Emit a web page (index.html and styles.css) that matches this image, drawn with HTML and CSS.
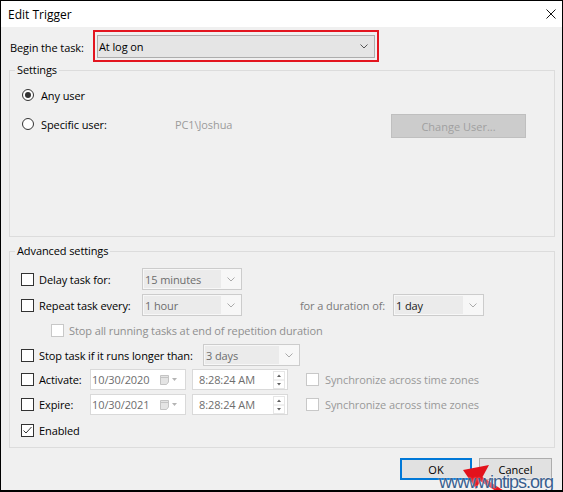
FILE: index.html
```html
<!DOCTYPE html>
<html>
<head>
<meta charset="utf-8">
<link rel="stylesheet" href="styles.css">
</head>
<body>
<div class="window">
  <div class="titlebar">
    <span class="title">Edit Trigger</span>
    <svg class="close" viewBox="0 0 10 10"><path d="M0.5 0.5L9.5 9.5M9.5 0.5L0.5 9.5" stroke="#111" stroke-width="1"/></svg>
  </div>
  <div class="content">
    <div class="begin-row">
      <span class="begin-label">Begin the task:</span>
      <div class="highlight">
        <div class="combo-main">
          <span>At log on</span>
          <svg class="chev" viewBox="0 0 8 5"><path d="M0.5 0.5L4 4L7.5 0.5" fill="none" stroke="#555"/></svg>
        </div>
      </div>
    </div>

    <fieldset class="group group-settings">
      <legend>Settings</legend>
      <div class="opt-row row-any">
        <span class="radio checked"></span>
        <span class="radio-text">Any user</span>
      </div>
      <div class="opt-row row-specific">
        <span class="radio up"></span>
        <span class="radio-text w-specific up">Specific user:</span>
        <span class="user-name up">PC1\Joshua</span>
        <button class="btn-change">Change User...</button>
      </div>
    </fieldset>

    <fieldset class="group group-advanced">
      <legend>Advanced settings</legend>
      <div class="adv-row r1">
        <div class="lbl w121"><span class="chk"></span><span class="chk-text">Delay task for:</span></div>
        <div class="combo-sm cw100">
          <span class="field">15 minutes</span>
          <svg class="chev" viewBox="0 0 8 5"><path d="M0.5 0.5L4 4L7.5 0.5" fill="none" stroke="#aaa"/></svg>
        </div>
      </div>
      <div class="adv-row r2">
        <div class="lbl w121"><span class="chk"></span><span class="chk-text">Repeat task every:</span></div>
        <div class="combo-sm cw100">
          <span class="field">1 hour</span>
          <svg class="chev" viewBox="0 0 8 5"><path d="M0.5 0.5L4 4L7.5 0.5" fill="none" stroke="#aaa"/></svg>
        </div>
        <span class="duration-label">for a duration of:</span>
        <div class="combo-sm cw91">
          <span class="field dark">1 day</span>
          <svg class="chev" viewBox="0 0 8 5"><path d="M0.5 0.5L4 4L7.5 0.5" fill="none" stroke="#aaa"/></svg>
        </div>
      </div>
      <div class="adv-row r3">
        <span class="chk disabled"></span><span class="chk-text muted">Stop all running tasks at end of repetition duration</span>
      </div>
      <div class="adv-row r4">
        <div class="lbl w182"><span class="chk"></span><span class="chk-text">Stop task if it runs longer than:</span></div>
        <div class="combo-sm cw97">
          <span class="field">3 days</span>
          <svg class="chev" viewBox="0 0 8 5"><path d="M0.5 0.5L4 4L7.5 0.5" fill="none" stroke="#aaa"/></svg>
        </div>
      </div>
      <div class="adv-row r5">
        <div class="lbl w69"><span class="chk"></span><span class="chk-text">Activate:</span></div>
        <div class="picker date">
          <span>10/30/2020</span>
          <svg class="cal" viewBox="0 0 9 10"><path d="M0.5 0.5H8.5V7L6.5 9.5H0.5Z" fill="#e4e4e4" stroke="#c4c4c4"/><path d="M1 2.5H8" stroke="#c4c4c4"/></svg>
          <svg class="drop" viewBox="0 0 5 3"><path d="M0 0H5L2.5 3Z" fill="#b4b4b4"/></svg>
        </div>
        <div class="picker time">
          <span>8:28:24 AM</span>
          <svg class="spin" viewBox="0 0 12 18"><rect x="0.5" y="0.5" width="11" height="17" fill="#fff" stroke="#e6e6e6"/><path d="M1 9H11" stroke="#e0e0e0"/><path d="M4 6L6 3.5L8 6Z" fill="#606060"/><path d="M4 12L8 12L6 14.5Z" fill="#606060"/></svg>
        </div>
        <span class="chk disabled sync"></span><span class="sync-text">Synchronize across time zones</span>
      </div>
      <div class="adv-row r6">
        <div class="lbl w69"><span class="chk"></span><span class="chk-text">Expire:</span></div>
        <div class="picker date">
          <span>10/30/2021</span>
          <svg class="cal" viewBox="0 0 9 10"><path d="M0.5 0.5H8.5V7L6.5 9.5H0.5Z" fill="#e4e4e4" stroke="#c4c4c4"/><path d="M1 2.5H8" stroke="#c4c4c4"/></svg>
          <svg class="drop" viewBox="0 0 5 3"><path d="M0 0H5L2.5 3Z" fill="#b4b4b4"/></svg>
        </div>
        <div class="picker time">
          <span>8:28:24 AM</span>
          <svg class="spin" viewBox="0 0 12 18"><rect x="0.5" y="0.5" width="11" height="17" fill="#fff" stroke="#e6e6e6"/><path d="M1 9H11" stroke="#e0e0e0"/><path d="M4 6L6 3.5L8 6Z" fill="#606060"/><path d="M4 12L8 12L6 14.5Z" fill="#606060"/></svg>
        </div>
        <span class="chk disabled sync"></span><span class="sync-text">Synchronize across time zones</span>
      </div>
      <div class="adv-row r7">
        <span class="chk checked"><svg viewBox="0 0 11 11"><path d="M1.5 5.5L4 8L9.5 2" fill="none" stroke="#333" stroke-width="1"/></svg></span>
        <span class="chk-text">Enabled</span>
      </div>
    </fieldset>

    <div class="buttons">
      <button class="btn btn-ok">OK</button>
      <button class="btn btn-cancel">Cancel</button>
    </div>
  </div>

  <svg class="arrow" viewBox="0 0 563 492">
    <path d="M478 477L508 496" stroke="#e3121c" stroke-width="4.5"/>
    <path d="M463 470L489 465L476 489Z" fill="#e3121c"/>
  </svg>
  <span class="watermark">www.wintips.org</span>
</div>
</body>
</html>
```

FILE: styles.css
```css
* {
  box-sizing: border-box;
}

html,
body {
  margin: 0;
  padding: 0;
}

body {
  font-family: "Open Sans", "Noto Sans", sans-serif;
  font-size: 11px;
  letter-spacing: -0.1px;
  color: #000;
  background: #fff;
}

.window {
  position: relative;
  width: 563px;
  height: 492px;
  border: 1px solid #000;
  border-bottom-width: 2px;
  background: #f0f0f0;
  overflow: hidden;
}

.titlebar {
  height: 26px;
  background: #fff;
  display: flex;
  align-items: center;
  justify-content: space-between;
  padding: 0 6px 0 7px;
}

.title {
  font-size: 12px;
  letter-spacing: 0;
}

.close {
  width: 10px;
  height: 10px;
}

.content {
  padding: 0 7px 0 8px;
}

.begin-row {
  display: flex;
  align-items: center;
  margin-top: 3px;
}

.begin-label {
  width: 84px;
  padding-left: 1px;
  padding-top: 3px;
}

.highlight {
  border: 2px solid #e3151f;
  padding: 3px 2px 2px 2px;
}

.combo-main {
  width: 278px;
  height: 23px;
  border: 1px solid #adadad;
  background: #e5e5e5;
  display: flex;
  align-items: center;
  justify-content: space-between;
  padding: 0 6px 0 1px;
}

.chev {
  width: 8px;
  height: 5px;
  flex: none;
}

.group {
  margin: 0;
  padding: 0;
  border: 1px solid #dcdcdc;
  min-width: 0;
  width: 100%;
}

.group legend {
  margin-left: 5px;
  padding: 0 2px;
  line-height: 16px;
}

.group-settings {
  height: 175px;
}

.group-advanced {
  height: 205px;
  margin-top: 6px;
}

.opt-row {
  display: flex;
  align-items: center;
  margin-left: 12px;
}

.row-any {
  margin-top: 7px;
  height: 20px;
}

.row-specific {
  margin-top: 9px;
  height: 24px;
}

.up {
  margin-bottom: 4px;
}

.radio {
  width: 12px;
  height: 12px;
  border: 1px solid #333;
  border-radius: 50%;
  background: #fff;
  display: flex;
  align-items: center;
  justify-content: center;
  flex: none;
}

.radio.checked::after {
  content: "";
  width: 6px;
  height: 6px;
  border-radius: 50%;
  background: #333;
}

.radio-text {
  margin-left: 7px;
}

.w-specific {
  width: 134px;
}

.user-name {
  color: #9b9b9b;
}

.btn-change {
  margin-left: auto;
  margin-right: 28px;
  width: 135px;
  height: 24px;
  background: #cccccc;
  border: 1px solid #bfbfbf;
  color: #a0a0a0;
  font: inherit;
  padding: 0;
}

.adv-row {
  display: flex;
  align-items: center;
  margin-left: 11px;
}

.r1 {
  margin-top: 9px;
  height: 22px;
}

.r2 {
  margin-top: 4px;
  height: 22px;
}

.r3 {
  margin-top: 4px;
  height: 20px;
  margin-left: 41px;
}

.r4 {
  margin-top: 4px;
  height: 22px;
}

.r5 {
  margin-top: 3px;
  height: 21px;
}

.r6 {
  margin-top: 4px;
  height: 21px;
}

.r7 {
  margin-top: 5px;
  height: 20px;
}

.lbl {
  display: flex;
  align-items: center;
  flex: none;
}

.w121 {
  width: 121px;
}

.w182 {
  width: 182px;
}

.w69 {
  width: 69px;
}

.chk {
  width: 13px;
  height: 13px;
  border: 1px solid #333;
  background: #fff;
  flex: none;
  display: flex;
}

.chk svg {
  width: 11px;
  height: 11px;
}

.chk.disabled {
  border-color: #c8c8c8;
}

.chk-text {
  margin-left: 5px;
}

.muted {
  color: #8f8f8f;
}

.combo-sm {
  height: 22px;
  border: 1px solid #cccccc;
  background: #f7f7f7;
  display: flex;
  align-items: center;
  padding: 1px;
  flex: none;
}

.combo-sm .field {
  flex: 1;
  height: 18px;
  background: #ebebeb;
  display: flex;
  align-items: center;
  padding-left: 1px;
  color: #6d6d6d;
}

.combo-sm .field.dark {
  color: #1a1a1a;
}

.combo-sm .chev {
  margin: 0 5px 0 6px;
}

.cw100 {
  width: 100px;
}

.cw97 {
  width: 97px;
}

.cw91 {
  width: 91px;
}

.duration-label {
  margin-left: 58px;
  width: 93px;
  color: #7a7a7a;
}

.picker {
  width: 96px;
  height: 21px;
  border: 1px solid #d9d9d9;
  background: #fff;
  display: flex;
  align-items: center;
  color: #6d6d6d;
  flex: none;
}

.picker.date {
  padding: 0 8px 0 1px;
}

.picker.time {
  margin-left: 6px;
  padding: 0 2px 0 6px;
}

.cal {
  width: 9px;
  height: 10px;
  margin-left: auto;
}

.drop {
  width: 5px;
  height: 3px;
  margin-left: 3px;
}

.spin {
  width: 12px;
  height: 18px;
  margin-left: auto;
}

.sync {
  margin-left: 18px;
}

.sync-text {
  margin-left: 6px;
  color: #999;
}

.buttons {
  display: flex;
  justify-content: flex-end;
  margin-top: 10px;
  margin-right: 3px;
}

.btn {
  font: inherit;
  height: 22px;
  background: #e1e1e1;
  border: 1px solid #adadad;
  padding: 0;
  color: #000;
}

.btn-ok {
  width: 72px;
  border: 2px solid #0078d7;
}

.btn-cancel {
  width: 73px;
  margin-left: 7px;
}

.arrow {
  position: absolute;
  left: -1px;
  top: -1px;
  width: 563px;
  height: 492px;
  pointer-events: none;
}

.watermark {
  position: absolute;
  left: 438px;
  top: 476px;
  font-family: "Liberation Sans", Arial, sans-serif;
  font-size: 18px;
  line-height: 10px;
  letter-spacing: -1px;
  color: #3a5f8f;
  text-shadow: 0 0 2px #fff;
}
```
